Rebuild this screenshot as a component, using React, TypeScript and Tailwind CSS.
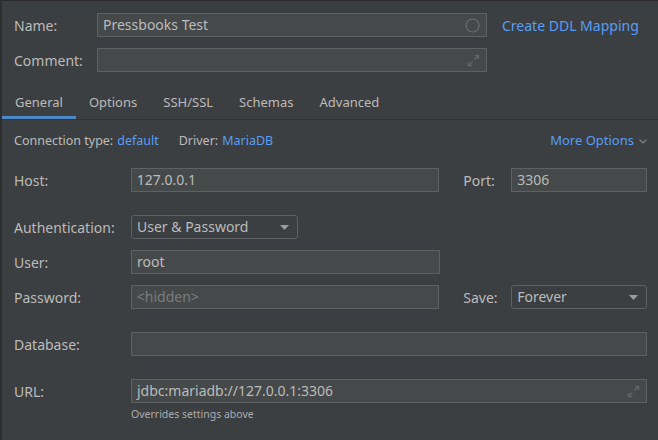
import React from "react";

const font = { fontFamily: '"Noto Sans", "Open Sans", sans-serif' };

function Field({
  value,
  placeholder,
  className,
  icon,
}: {
  value?: string;
  placeholder?: string;
  className: string;
  icon?: React.ReactNode;
}) {
  return (
    <div
      className={`flex items-center h-[24px] border border-[#5e6163] bg-[#45494a] pl-[5px] pr-[6px] ${className}`}
    >
      <span className={`flex-1 text-[14px] leading-none ${placeholder ? "text-[#7a7d7f]" : "text-[#bbbbbb]"}`}>
        {value ?? placeholder}
      </span>
      {icon}
    </div>
  );
}

function Select({ value, className }: { value: string; className: string }) {
  return (
    <div
      className={`flex items-center h-[24px] border border-[#5e6163] rounded-[3px] bg-[#3c3f41] pl-[5px] pr-[8px] ${className}`}
    >
      <span className="flex-1 text-[14px] leading-none text-[#bbbbbb]">{value}</span>
      <svg width="9" height="5" viewBox="0 0 9 5">
        <path d="M0 0h9L4.5 5z" fill="#9a9da0" />
      </svg>
    </div>
  );
}

const ExpandIcon = () => (
  <svg width="13" height="13" viewBox="0 0 13 13" fill="none" stroke="#5f6466" strokeWidth="1.3">
    <path d="M7.5 5.5L11.5 1.5M8 1.5h3.5V5" />
    <path d="M5.5 7.5L1.5 11.5M1.5 8v3.5H5" />
  </svg>
);

const tabs = ["General", "Options", "SSH/SSL", "Schemas", "Advanced"];

export default function App() {
  return (
    <div
      style={font}
      className="w-[658px] h-[440px] overflow-hidden bg-[#3c3f41] border-t border-[#2b2b2b] border-l-2 border-l-[#2d2f30] text-[#bbbbbb] text-[14px]"
    >
      <div className="pl-[12px] pt-[12px]">
        <div className="flex items-center">
          <span className="w-[83px]">Name:</span>
          <Field
            value="Pressbooks Test"
            className="w-[390px]"
            icon={
              <svg width="15" height="15" viewBox="0 0 15 15">
                <circle cx="7.5" cy="7.5" r="6.5" fill="none" stroke="#6b6e70" strokeWidth="1.2" />
              </svg>
            }
          />
          <span className="ml-[15px] text-[#589df6]">Create DDL Mapping</span>
        </div>
        <div className="flex items-center mt-[11px]">
          <span className="w-[83px]">Comment:</span>
          <Field value="" className="w-[390px]" icon={<ExpandIcon />} />
        </div>
      </div>

      <div className="flex mt-[13px] h-[35px] border-b border-[#323436] text-[13px]">
        {tabs.map((t, i) => (
          <div
            key={t}
            className={`flex items-center px-[13px] ${i === 0 ? "border-b-[3px] border-[#4a88c7] pt-[4px]" : "pt-[1px]"}`}
          >
            {t}
          </div>
        ))}
      </div>

      <div className="pl-[12px] pr-[11px]">
        <div className="flex items-center h-[16px] mt-[13px] text-[12.5px]">
          <span>Connection type:</span>
          <span className="ml-[4px] text-[#589df6]">default</span>
          <span className="ml-[20px]">Driver:</span>
          <span className="ml-[4px] text-[#589df6]">MariaDB</span>
          <span className="ml-auto text-[#589df6] text-[13px]">More Options</span>
          <svg className="ml-[5px]" width="8" height="5" viewBox="0 0 8 5" fill="none" stroke="#7d8184" strokeWidth="1.2">
            <path d="M0.5 0.5L4 4L7.5 0.5" />
          </svg>
        </div>

        <div className="flex items-center mt-[19px]">
          <span className="w-[117px]">Host:</span>
          <Field value="127.0.0.1" className="w-[309px]" />
          <span className="ml-[24px] w-[48px]">Port:</span>
          <Field value="3306" className="w-[136px]" />
        </div>

        <div className="flex items-center mt-[23px]">
          <span className="w-[117px]">Authentication:</span>
          <Select value="User & Password" className="w-[167px]" />
        </div>

        <div className="flex items-center mt-[11px]">
          <span className="w-[117px]">User:</span>
          <Field value="root" className="w-[309px]" />
        </div>

        <div className="flex items-center mt-[11px]">
          <span className="w-[117px]">Password:</span>
          <Field placeholder="<hidden>" className="w-[309px]" />
          <span className="ml-[24px] w-[48px]">Save:</span>
          <Select value="Forever" className="w-[136px]" />
        </div>

        <div className="flex items-center mt-[23px]">
          <span className="w-[117px]">Database:</span>
          <Field value="" className="flex-1" />
        </div>

        <div className="flex items-center mt-[23px]">
          <span className="w-[117px]">URL:</span>
          <Field value="jdbc:mariadb://127.0.0.1:3306" className="flex-1" icon={<ExpandIcon />} />
        </div>
        <div className="ml-[117px] mt-[4px] text-[10.5px] text-[#a9acae]">Overrides settings above</div>
      </div>
    </div>
  );
}
